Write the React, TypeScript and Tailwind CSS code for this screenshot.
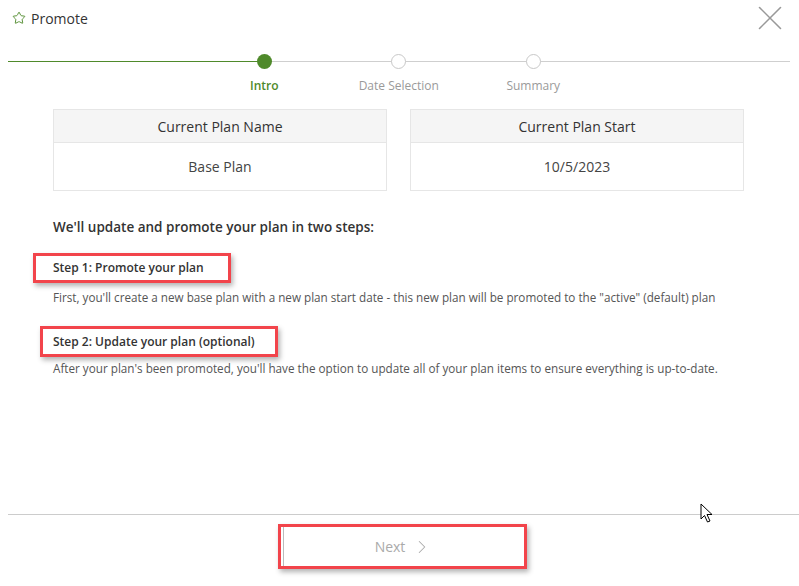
import { Star, X, ChevronRight } from "lucide-react";

const steps = [
  { label: "Intro", active: true },
  { label: "Date Selection", active: false },
  { label: "Summary", active: false },
];

function Stepper() {
  return (
    <div className="relative mx-[8px] mt-[18px] h-[55px]">
      <div className="absolute left-0 top-[7px] h-px w-[256px] bg-[#4f8a2b]" />
      <div className="absolute left-[256px] top-[7px] h-px w-[526px] bg-[#cfcfcf]" />
      <div className="relative ml-[189px] flex">
        {steps.map((s) => (
          <div key={s.label} className="flex w-[134.5px] flex-col items-center">
            <div
              className={
                s.active
                  ? "h-[15px] w-[15px] rounded-full bg-[#4f8a2b]"
                  : "h-[15px] w-[15px] rounded-full border border-[#c8c8c8] bg-white"
              }
            />
            <div
              className={
                s.active
                  ? "mt-[9px] text-[12px] font-semibold leading-[16px] text-[#4f8a2b]"
                  : "mt-[9px] text-[12px] leading-[16px] text-[#9a9a9a]"
              }
            >
              {s.label}
            </div>
          </div>
        ))}
      </div>
    </div>
  );
}

function PlanCard({ title, value }: { title: string; value: string }) {
  return (
    <div className="flex-1 border border-[#e6e6e6]">
      <div className="flex h-[33px] items-center justify-center border-b border-[#e6e6e6] bg-[#f5f5f5] text-[14px] text-[#333]">
        {title}
      </div>
      <div className="flex h-[47px] items-center justify-center text-[14px] text-[#444]">
        {value}
      </div>
    </div>
  );
}

function Cursor() {
  return (
    <svg
      className="absolute left-[700px] top-[503px]"
      width="14"
      height="21"
      viewBox="0 0 14 21"
    >
      <path
        d="M1 1 L1 16 L4.5 12.5 L7.5 19 L10 18 L7 11.5 L12 11.5 Z"
        fill="white"
        stroke="black"
        strokeWidth="1"
        strokeLinejoin="round"
      />
    </svg>
  );
}

export default function App() {
  return (
    <div
      className="relative flex h-[586px] w-[799px] flex-col overflow-hidden bg-white"
      style={{ fontFamily: '"Open Sans", "Liberation Sans", sans-serif' }}
    >
      <div className="flex h-[36px] items-center justify-between pl-[12px] pr-[8px]">
        <div className="flex items-center gap-[5px]">
          <Star className="h-[14px] w-[14px] text-[#4f8a2b]" strokeWidth={1.6} />
          <span className="text-[14px] text-[#333]">Promote</span>
        </div>
        <X className="h-[42px] w-[42px] text-[#999]" strokeWidth={0.9} />
      </div>

      <Stepper />

      <div className="flex-1 px-[53px]">
        <div className="flex gap-[23px] pr-[2px]">
          <PlanCard title="Current Plan Name" value="Base Plan" />
          <PlanCard title="Current Plan Start" value="10/5/2023" />
        </div>

        <div className="mt-[26px] text-[13.5px] font-semibold leading-[20px] text-[#333]">
          We'll update and promote your plan in two steps:
        </div>

        <div className="-ml-[20px] mt-[16px] flex h-[30px] w-[198px] items-center border-[3px] border-[#f2444b] pl-[17px] shadow-[2px_3px_5px_rgba(0,0,0,0.3)]">
          <span className="text-[12px] font-semibold text-[#333]">Step 1: Promote your plan</span>
        </div>
        <div className="mt-[6px] text-[11.7px] leading-[16px] text-[#555]">
          First, you'll create a new base plan with a new plan start date - this new plan will be promoted to the "active" (default) plan
        </div>

        <div className="-ml-[13px] mt-[21px] flex h-[31px] w-[238px] items-center border-[3px] border-[#f2444b] pl-[10px] shadow-[2px_3px_5px_rgba(0,0,0,0.3)]">
          <span className="text-[12px] font-semibold text-[#333]">Step 2: Update your plan (optional)</span>
        </div>
        <div className="mt-[3px] text-[11.7px] leading-[16px] text-[#555]">
          After your plan's been promoted, you'll have the option to update all of your plan items to ensure everything is up-to-date.
        </div>
      </div>

      <div className="ml-[8px] h-px bg-[#cccccc]" />
      <div className="flex h-[71px] justify-center pt-[9px]">
        <div className="ml-[6px] h-[45px] w-[249px] border-[3px] border-[#f2444b] shadow-[2px_3px_5px_rgba(0,0,0,0.3)]">
          <div className="ml-[2px] flex h-full items-center justify-center gap-[6px] border-l border-[#bbb] text-[14px] text-[#aaa]">
            <span>Next</span>
            <ChevronRight className="h-[22px] w-[22px]" strokeWidth={1.1} />
          </div>
        </div>
      </div>

      <Cursor />
    </div>
  );
}
